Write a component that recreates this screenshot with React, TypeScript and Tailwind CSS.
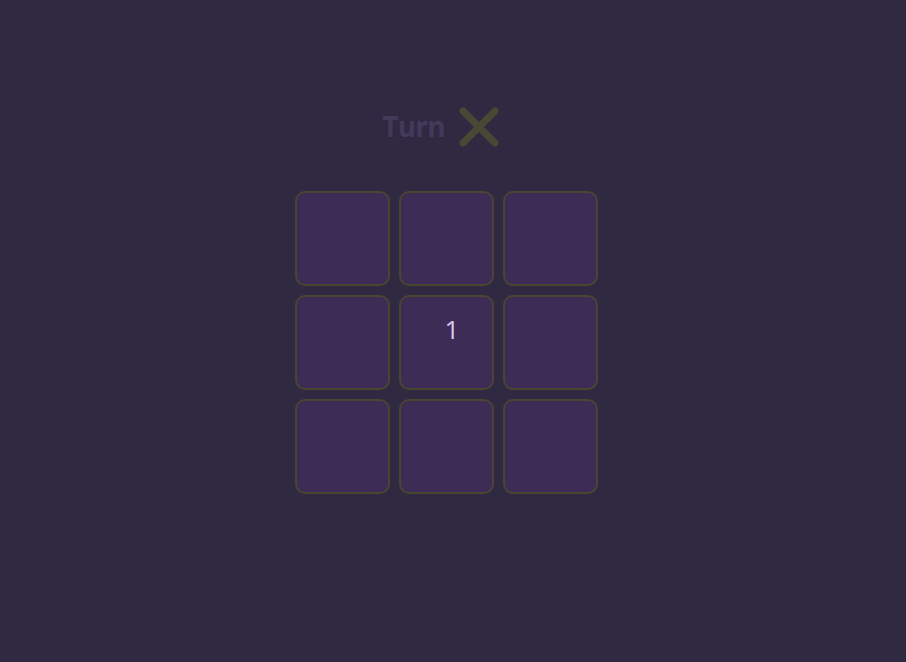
import React from 'react';

const App: React.FC = () => {
  const cells = ['', '', '', '', '1', '', '', '', ''];

  return (
    <div className="w-full h-[662px] bg-[#2f2942] flex flex-col items-center pt-[104px]" style={{ fontFamily: '"Open Sans", "Noto Sans", sans-serif' }}>
      <div className="flex items-center gap-[13px] h-[46px] mr-[24px]">
        <span className="text-[28px] font-bold text-[#433a5a] leading-none tracking-[-0.8px] mb-[3px]">Turn</span>
        <svg width="42" height="42" viewBox="0 0 42 42" fill="none">
          <path d="M5 5 L37 37 M37 5 L5 37" stroke="#4b4735" strokeWidth="7" strokeLinecap="round" />
        </svg>
      </div>
      <div className="grid grid-cols-3 gap-[9px] mt-[41px] mr-[14px]">
        {cells.map((c, i) => (
          <div
            key={i}
            className="w-[95px] h-[95px] rounded-[10px] border-2 border-[#4a4430] bg-[#3d2c55] flex justify-center pt-[19px] pl-[12px]"
          >
            <span className="text-[26px] text-[#d8c8f0] leading-none">{c}</span>
          </div>
        ))}
      </div>
    </div>
  );
};

export default App;
